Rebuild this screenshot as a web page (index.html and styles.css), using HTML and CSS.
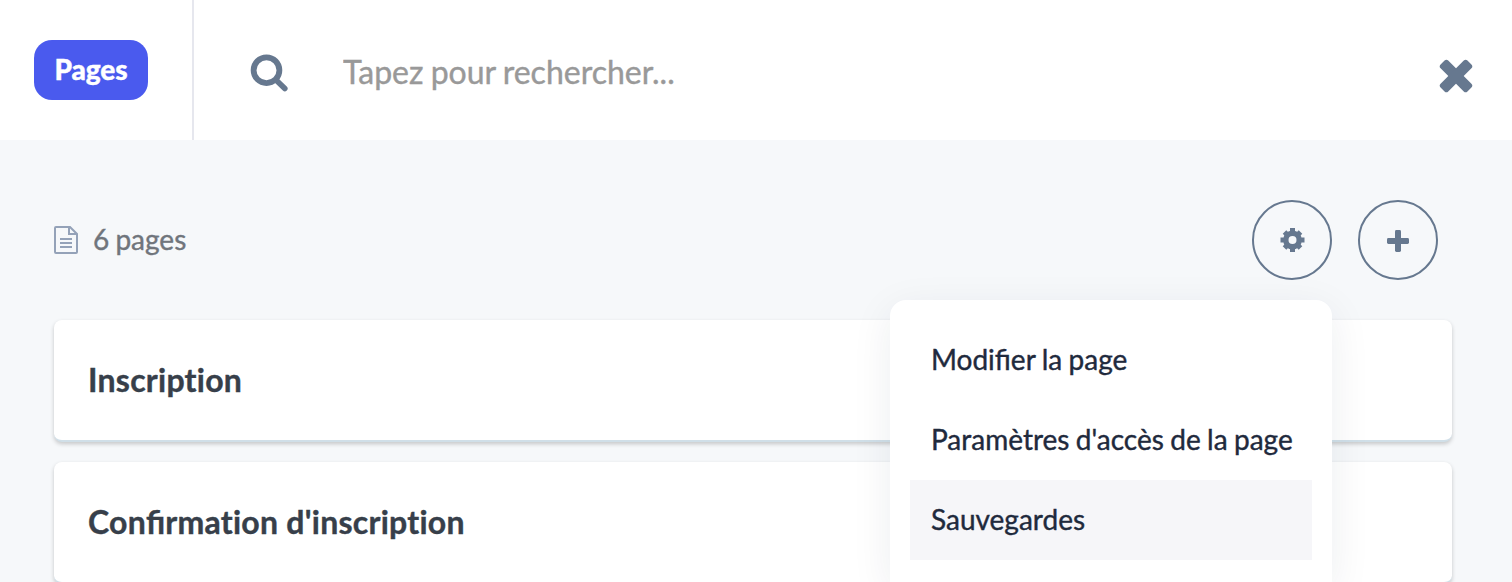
FILE: index.html
```html
<!DOCTYPE html>
<html lang="fr">
<head>
  <meta charset="UTF-8">
  <meta name="viewport" content="width=device-width, initial-scale=1.0">
  <title>Pages</title>
  <link rel="stylesheet" href="styles.css">
</head>
<body>
  <header class="topbar">
    <div class="topbar-tab">
      <span class="badge">Pages</span>
    </div>
    <div class="search">
      <svg class="search-icon" width="40" height="40" viewBox="0 0 40 40">
        <circle cx="17.5" cy="17.2" r="12.9" fill="none" stroke="currentColor" stroke-width="5.8"/>
        <path d="M27 27L35.8 35.6" stroke="currentColor" stroke-width="5.6" stroke-linecap="round"/>
      </svg>
      <input class="search-input" type="text" placeholder="Tapez pour rechercher...">
      <svg class="close-icon" width="34" height="34" viewBox="0 0 34 34" fill="currentColor">
        <g transform="rotate(45 17 17)">
          <rect x="-2" y="11.6" width="38" height="10.8" rx="2.6"/>
          <rect x="11.6" y="-2" width="10.8" height="38" rx="2.6"/>
        </g>
      </svg>
    </div>
  </header>

  <main class="content">
    <div class="toolbar">
      <div class="count">
        <svg class="doc-icon" width="24" height="28" viewBox="0 0 24 28" fill="none" stroke="currentColor" stroke-width="2">
          <path d="M2 1H16L23 8V26a1 1 0 0 1-1 1H2a1 1 0 0 1-1-1V2a1 1 0 0 1 1-1z"/>
          <path d="M15 1V8H23M6 13H18M6 17H18M6 21H18"/>
        </svg>
        <span>6 pages</span>
      </div>

      <div class="actions">
        <button class="round-button" aria-label="Options">
          <svg width="26" height="26" viewBox="0 0 26 26" fill="none" stroke="currentColor">
            <circle cx="13.5" cy="13" r="6.7" stroke-width="5.4"/>
            <path d="M13.5 6V1M13.5 20V25M6.5 13H1.5M20.5 13H25.5" stroke-width="5"/>
            <path d="M9 8.5L5.5 5M18 8.5L21.5 5M9 17.5L5.5 21M18 17.5L21.5 21" stroke-width="5"/>
          </svg>
        </button>
        <button class="round-button" aria-label="Ajouter">
          <svg class="plus-icon" width="22" height="22" viewBox="0 0 22 22" fill="currentColor">
            <rect x="8" y="0" width="6" height="22" rx="1.4"/>
            <rect x="0" y="8" width="22" height="6" rx="1.4"/>
          </svg>
        </button>

        <!-- Settings dropdown -->
        <ul class="menu">
          <li class="menu-item">Modifier la page</li>
          <li class="menu-item">Paramètres d'accès de la page</li>
          <li class="menu-item active">Sauvegardes</li>
        </ul>
      </div>
    </div>

    <!-- Page list -->
    <div class="page-list">
      <div class="page-card">Inscription</div>
      <div class="page-card">Con<span class="ligature">fi</span>rmation d'inscription</div>
    </div>
  </main>
</body>
</html>
```
FILE: styles.css
```css
/* Base */
* {
  box-sizing: border-box;
}

html {
  height: 100%;
  overflow: hidden;
}

body {
  margin: 0;
  height: 100%;
  overflow: hidden;
  font-family: Lato, sans-serif;
  background-color: #f6f8fa;
  color: #373f4a;
}

/* Top bar */
.topbar {
  display: flex;
  height: 140px;
  background: #fff;
}

.topbar-tab {
  display: flex;
  align-items: center;
  width: 194px;
  padding-left: 34px;
  border-right: 2px solid #e6e7ee;
}

.badge {
  width: 114px;
  height: 60px;
  border-radius: 18px;
  background: #4a5aee;
  color: #fff;
  font-size: 28px;
  font-weight: 900;
  letter-spacing: -0.1px;
  line-height: 59px;
  text-align: center;
  -webkit-text-stroke: 0.4px;
}

.search {
  display: flex;
  flex: 1;
  align-items: center;
  padding: 0 39px 0 55px;
  color: #66788f;
}

.search-icon {
  margin-top: 6px;
}

.search-input {
  flex: 1;
  margin: 2px 0 0 54px;
  padding: 0;
  border: none;
  outline: none;
  background: none;
  font-family: inherit;
  font-size: 32px;
  word-spacing: -1px;
}

.search-input::placeholder {
  color: #999;
  -webkit-text-stroke: 0.4px;
}

.close-icon {
  margin-top: 12px;
}

/* Toolbar */
.content {
  padding: 60px 60px 0 54px;
}

.toolbar {
  display: flex;
  align-items: center;
  justify-content: space-between;
  height: 80px;
  padding-right: 14px;
}

.count {
  display: flex;
  align-items: center;
  gap: 15px;
  color: #70757c;
  font-size: 28px;
  line-height: 32px;
  word-spacing: -1px;
  -webkit-text-stroke: 0.4px;
}

.count span {
  padding-bottom: 2px;
}

.doc-icon {
  color: #94a2b8;
}

.actions {
  position: relative;
  display: flex;
  gap: 26px;
}

.round-button {
  display: flex;
  align-items: center;
  justify-content: center;
  width: 80px;
  height: 80px;
  padding: 0;
  border: 2px solid #66788f;
  border-radius: 50%;
  background: none;
  color: #66788f;
}

.plus-icon {
  margin-top: 2px;
}

/* Dropdown menu */
.menu {
  position: absolute;
  top: 100px;
  right: 106px;
  z-index: 1;
  width: 442px;
  height: 282px;
  margin: 0;
  padding: 20px;
  border-radius: 16px 16px 0 0;
  background: #fff;
  box-shadow: 0 10px 40px rgba(30, 41, 70, 0.08);
  list-style: none;
}

.menu-item {
  height: 80px;
  padding-left: 21px;
  color: #1f2a3d;
  font-size: 28px;
  line-height: 78px;
  white-space: nowrap;
  word-spacing: -0.8px;
  -webkit-text-stroke: 0.4px;
}

.menu-item.active {
  background: #f6f6f9;
}

/* Page cards */
.page-list {
  display: flex;
  flex-direction: column;
  gap: 20px;
  margin-top: 40px;
}

.page-card {
  height: 122px;
  padding-left: 34px;
  border-bottom: 2px solid #d0dfe8;
  border-radius: 8px;
  background: #fff;
  box-shadow: 0 2px 4px rgba(0, 0, 0, 0.2);
  font-size: 32px;
  font-weight: 700;
  font-variant-ligatures: none;
  letter-spacing: 0.26px;
  line-height: 119px;
  -webkit-text-stroke: 0.4px;
}

.ligature {
  font-variant-ligatures: normal;
  letter-spacing: 0;
}
```
